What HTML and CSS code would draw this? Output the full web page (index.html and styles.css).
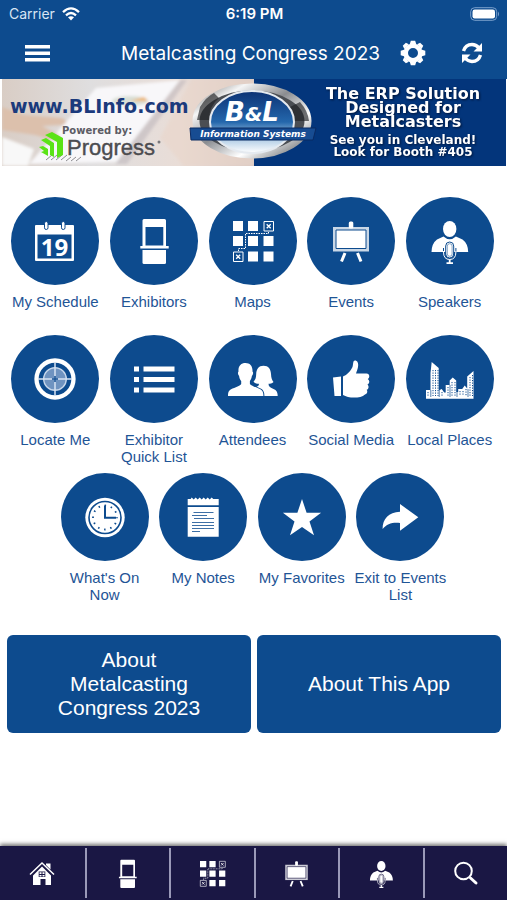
FILE: index.html
```html
<!DOCTYPE html>
<html lang="en">
<head>
<meta charset="utf-8">
<meta name="viewport" content="width=device-width, initial-scale=1">
<title>Metalcasting Congress 2023</title>
<link rel="stylesheet" href="styles.css">
</head>
<body>
<svg class="sprite" aria-hidden="true">
  <symbol id="i-exhibitors" viewBox="-4 -4 56 56">
    <path fill-rule="evenodd" d="M14 2h20.500a1.500 1.500 0 0 1 1.500 1.500V29h2.700v2.500H10.300V29h2.200V3.500A1.500 1.500 0 0 1 14 2zM15.500 10v18.500h17.800V10z"/>
    <path d="M12.500 33H36v12.500a1.500 1.500 0 0 1-1.500 1.500H14a1.500 1.500 0 0 1-1.500-1.500z"/>
  </symbol>
  <symbol id="i-maps" viewBox="-4 -4 56 56">
    <path d="M4 4h10v10H4zM19 4h10v10H19zM4 19h10v10H4zM19 19h10v10H19zM34.500 19h10v10h-10zM19 34.500h10v10H19zM34.500 34.500h10v10h-10z"/>
    <g class="thin">
      <path d="M35 4.500h9.500V14H35zM4.500 35H14v9.500H4.500z"/>
      <path stroke-width="1.300" d="M37.700 7.200l4 4M41.700 7.200l-4 4M7.200 37.700l4 4M11.200 37.700l-4 4"/>
      <path stroke-dasharray="1.500 1" d="M9.500 34v-2.500h7v-15h23V14"/>
    </g>
  </symbol>
  <symbol id="i-events" viewBox="-4 -4 56 56">
    <rect x="21.800" y="4.500" width="4.500" height="7" rx="1.500"/>
    <path fill-opacity=".78" d="M6 10h36v24.500H6z"/>
    <path class="cut-line" d="M9 13h30v18.500H9z"/>
    <path class="leg" d="M18 36l-3.500 8.500M30.500 36l3.500 8.500"/>
  </symbol>
  <symbol id="i-speakers" viewBox="-4 -4 56 56">
    <ellipse cx="23.700" cy="12" rx="6.700" ry="8"/>
    <path d="M17.500 19.500q6.200 5.500 12.400 0l6.600 3q5.500 4 5.700 12.500H5.500q.2-8.500 5.500-12.500z"/>
    <rect class="cut-line" x="19.700" y="25" width="8" height="16" rx="4"/>
    <path class="cut-stroke" d="M17.500 31v4q0 7.500 6.200 7.500t6.200-7.500v-4"/>
    <path class="thin" d="M17.500 34v1q0 7.500 6.200 7.500t6.200-7.500v-1"/>
    <path class="thin" stroke-width="1.800" d="M23.700 42.500V46M20.500 46.200h6.500"/>
    <rect class="cut-hair" x="21.300" y="26.700" width="4.800" height="12.600" rx="2.400"/>
  </symbol>
  <symbol id="i-locate" viewBox="-4 -4 56 56">
    <circle cx="24" cy="24" r="18.500" fill="none" stroke="#fff" stroke-width="4.300"/>
    <circle cx="24" cy="24" r="11.300" fill="#6f93c0" stroke="#c6d6ea" stroke-width="1.400"/>
    <path fill="none" stroke="#d8e4f2" stroke-width="1.500" d="M24 7v14M24 27v14M7 24h14M27 24h14"/>
    <path class="cut-stroke" stroke-width="1" d="M21 24h6M24 21v6"/>
  </symbol>
  <symbol id="i-list" viewBox="-4 -4 56 56">
    <path d="M4 11.500h5v5H4zM13.500 11.500h31v5h-31zM4 22h5v5H4zM13.500 22h31v5h-31zM4 32.500h5v5H4zM13.500 32.500h31v5h-31z"/>
  </symbol>
  <symbol id="i-attendees" viewBox="-4 -4 56 56">
    <path d="M34.500 10.700c5 0 7.300 3.300 7.500 8.300.2 4 1 6 2.500 8-1.500 1.500-3.500 1.700-5 1.700 0 3 2 4 5 5.300 3 1.400 4.200 3 4.200 7H24V34l5-3c1-1 1-1.500.8-2.300-2 0-4-.7-5.300-2 2-2 2.600-4 2.700-7.700.2-5 2.500-8.300 7.300-8.300z"/>
    <path class="cut-under" d="M16.500 8c4.500 0 7.300 3 7 8.500 1 .8.800 3-.6 4.500-.5 3-1.400 4-2 5v3c2 2.500 9 4 11.500 6 1.800 1.500 2 3.500 2 6H-1c0-2.500 0-4.500 2-6 2.500-2 9.500-3.500 11.200-6v-3c-.8-1-1.700-2-2.100-5-1.400-1.500-1.500-3.700-.6-4.500C9 11 12 8 16.500 8z"/>
    <path fill="#0d4b8e" d="M-4 41h56v4H-4z"/>
  </symbol>
  <symbol id="i-thumb" viewBox="-4 -4 56 56">
    <path d="M6 22.500l8-1v19.500H7.500zM16 21.500c4-1.500 8-6 9.500-9.500.6-2 .5-4 1-5.500.7-1.500 3-1.200 4 .5 1.600 3 .2 7-1.500 11.500h10.500c3.500 0 3.500 4.500 1.200 5.500 2.500 1.500 1.800 4.800-.2 5.500 1.700 1.500 1.300 4.700-.8 5.300 1.200 1.700.6 4-1.700 4.700-3.500 3.500-12 3.500-17 2.500-2-.4-3.500-1.500-5-2z"/>
  </symbol>
  <symbol id="i-city" viewBox="-4 -4 56 56">
    <path d="M0 43.800V35h4.500V18l1.200-11 7 6v22.500l3-1.500 2.500 3.500h1.500V30h4v-4.500l3-3 3.500 3V37h2v-3h4l2.500-3.500 2.500 3v-12l6.300-5.500v27.800z"/>
    <path fill="none" stroke="#0d4b8e" stroke-width="1" stroke-dasharray="1.200 1.300" d="M7 15v26M9.500 15v26M12 15v26M2 37v5M22 32v9M26 27v14M29 27v14M34 36v5M37 36v5M40 34v7M44 22v19M46.500 20v21M16 37v4"/>
    <path fill="none" stroke="#0d4b8e" stroke-width=".7" d="M4.800 35v7M13.200 35v7M24 30v12M31 37v5M42 34v8"/>
  </symbol>
  <symbol id="i-clock" viewBox="-4 -4 56 56">
    <circle cx="24" cy="24.500" r="19.700"/>
    <circle class="cut-stroke" cx="24" cy="24.500" r="16" stroke-width="1.600"/>
    <path class="cut-stroke" stroke-width="2" d="M24 12.500v12.300h11"/>
    <circle class="cut-stroke" cx="24" cy="24.500" r="12" stroke-width="1.800" stroke-dasharray="1.500 4.780" stroke-dashoffset=".7"/>
  </symbol>
  <symbol id="i-notes" viewBox="-4 -4 56 56">
    <path d="M8.700 6h3l1-1.500 2 2 2-2 2 2 2-2 2 2 2-2 2 2 2-2 2 2 2-2 1.500 1.500h5.500v6.200h-31zM8.700 14h31v29.700h-31z"/>
    <path class="cut-stroke" stroke-width="1" opacity=".8" d="M14.500 19.500h20M13 22.500h15M15 25.500h20M13 29.500h22M13 32.500h22M13 35.500h22M13 38.500h8"/>
  </symbol>
  <symbol id="i-star" viewBox="-4 -4 56 56">
    <path d="M24 6l4.600 13.800h14.500L31.500 28.600 36 42.300 24 33.900l-12 8.400 4.500-13.700L4.900 19.800h14.500z"/>
  </symbol>
  <symbol id="i-exit" viewBox="-4 -4 56 56">
    <path d="M24 11l18.300 13.300L24 37.700V30c-8-.8-13 1-17.400 6C6.500 26 12.500 19.300 24 18.700z"/>
  </symbol>
  <symbol id="i-home" viewBox="0 0 26 26">
    <path d="M17 3.500h4.500v6L17 5z"/>
    <path d="M13 6.500l9 9V25h-5.500v-6h-5v6H4v-9.500z"/>
    <path fill="none" stroke="#fff" stroke-width="1.500" d="M1 14.500L13 3l12 11.500"/>
    <path class="cut-fill" d="M9.700 11.500h6.600v5.500H9.700z"/>
    <path d="M10.500 12.300h2v1.700h-2zM13.500 12.300h2v1.700h-2zM10.500 15h2v1.500h-2zM13.500 15h2v1.500h-2z"/>
  </symbol>
  <symbol id="i-search" viewBox="0 0 26 26">
    <circle cx="10.500" cy="11" r="8.300" fill="none" stroke="#fff" stroke-width="2"/>
    <path fill="none" stroke="#fff" stroke-width="3" stroke-linecap="round" d="M17.500 18l5.500 5"/>
  </symbol>
</svg>

<header class="header">
  <div class="status">
    <span class="carrier">Carrier
      <svg class="wifi" viewBox="0 0 18 14" aria-hidden="true">
        <path fill="none" stroke="#fff" stroke-width="2.300" d="M1 5.200q8-7.600 16 0M4 8.300q5-4.600 10 0"/>
        <path fill="#fff" d="M9 13.500l-3-3.200q3-2.300 6 0z"/>
      </svg>
    </span>
    <span class="time">6:19 PM</span>
    <svg class="battery" viewBox="0 0 30 14" aria-hidden="true">
      <rect x=".7" y=".7" width="26" height="12.600" rx="4" fill="none" stroke="#7ba0cc"/>
      <rect x="2.500" y="2.500" width="22.500" height="9" rx="2.200" fill="#fff"/>
      <path d="M28 4.500q2 2.500 0 5z" fill="#7ba0cc"/>
    </svg>
  </div>
  <div class="toolbar">
    <button class="tool" type="button" aria-label="Menu">
      <svg width="25" height="17" viewBox="0 0 25 17"><path fill="#fff" d="M0 0h25v3.500H0zM0 6.500h25V10H0zM0 13h25v3.500H0z"/></svg>
    </button>
    <h1 class="title">Metalcasting Congress 2023</h1>
    <button class="tool" type="button" aria-label="Settings">
      <svg width="26" height="26" viewBox="-13 -13 26 26">
        <circle r="7.300" fill="none" stroke="#fff" stroke-width="4.600"/>
        <g fill="#fff">
          <path id="tooth" d="M-3.200-9l1-3.300h4.400l1 3.300z"/>
          <use href="#tooth" transform="rotate(45)"/><use href="#tooth" transform="rotate(90)"/><use href="#tooth" transform="rotate(135)"/><use href="#tooth" transform="rotate(180)"/><use href="#tooth" transform="rotate(225)"/><use href="#tooth" transform="rotate(270)"/><use href="#tooth" transform="rotate(315)"/>
        </g>
      </svg>
    </button>
    <button class="tool" type="button" aria-label="Refresh">
      <svg width="22" height="22" viewBox="0 0 22 22">
        <g fill="none" stroke="#fff" stroke-width="3.400"><path d="M2.500 9Q4.500 2.500 11 2.500q4 0 7 3.500M19.500 13q-2 6.500-8.500 6.500-4 0-7-3.500"/></g>
        <path fill="#fff" d="M21 1v8.500h-8.500zM1 21v-8.500h8.500z"/>
      </svg>
    </button>
  </div>
</header>

<main class="main">
  <a class="banner" href="#sponsor">
    <svg viewBox="0 0 504 87" role="img" aria-label="B&amp;L Information Systems">
      <defs>
        <linearGradient id="photo" x2="1" y2="0"><stop offset="0" stop-color="#d9cdc5"/><stop offset=".35" stop-color="#dfdedf"/><stop offset=".7" stop-color="#e9ddd7"/><stop offset="1" stop-color="#d6c6c0"/></linearGradient>
        <linearGradient id="chrome" x2="1" y2="1"><stop offset="0" stop-color="#777"/><stop offset=".2" stop-color="#f5f5f5"/><stop offset=".45" stop-color="#8a8c90"/><stop offset=".7" stop-color="#fff"/><stop offset="1" stop-color="#55585c"/></linearGradient>
        <linearGradient id="core" x2="0" y2="1"><stop offset="0" stop-color="#0c3274"/><stop offset=".5" stop-color="#2467ac"/><stop offset=".72" stop-color="#9dc0df"/><stop offset="1" stop-color="#fff"/></linearGradient>
        <filter id="soft" x="-10%" y="-10%" width="120%" height="120%"><feGaussianBlur stdDeviation="1.500"/></filter>
        <clipPath id="left"><path d="M0 0h252v87H0z"/></clipPath>
      </defs>
      <path fill="url(#photo)" d="M0 0h252v87H0z"/>
      <g clip-path="url(#left)">
        <g filter="url(#soft)">
          <path fill="#f8f7f9" d="M94 9l84-8-63 82-88 2z"/>
          <path fill="#bfb8bc" d="M178 1l7 0-60 84-12 0z" opacity=".6"/>
          <path fill="#f8f8f8" d="M0 58l32 12-6 17H0z"/>
          <path fill="#dcc0ac" d="M0 28l22 8 38 3q8 4 0 7l-20 1 18 10-5 5-20-6-33-5z"/>
          <path fill="#e9d5c9" d="M190 0h62v87h-70l-24-28z" opacity=".6"/>
          <ellipse cx="128" cy="22" rx="18" ry="5" fill="#d9dfd6"/>
          <path fill="#efb46c" d="M128 22l14-4 4 4z"/>
        </g>
      </g>
      <path fill="none" stroke="#8d8d91" stroke-width="1" d="M44 81l6-5M49 81l6-5M54 81l6-5M59 81l6-5M64 82l5-4M69 82l5-4M74 82l5-4"/>
      <path fill="#03357b" d="M252 0h252v87H252z"/>
      <text class="b-url" x="8" y="34">www.BLInfo.com</text>
      <text class="b-powered" x="60" y="55">Powered by:</text>
      <path fill="#5be316" d="M43 56l7-3 11 6v17l-6 3V63zM39 61l5-2 8 5v14l-4-2V67zM37 68l4-1 5 3v7l-7-4 3-1z"/>
      <text class="b-progress" x="65" y="76">Progress</text>
      <circle cx="157" cy="63" r="1.500" fill="#77777b"/>
      <ellipse cx="251" cy="42.500" rx="58" ry="36" fill="#4b4e53"/>
      <ellipse cx="250" cy="42" rx="56" ry="34" fill="none" stroke="url(#chrome)" stroke-width="7"/>
      <path fill="#202225" d="M198 28q6-10 14-14l5 5q-10 8-10 22h-12zM298 23q8 9 9 19h-16l-5-13z" opacity=".65"/>
      <ellipse cx="250" cy="43" rx="42" ry="31" fill="url(#core)" stroke="#e5eaf0" stroke-width="2"/>
      <path fill="#174c92" stroke="#092a63" stroke-width="1" d="M188 49h126l-3 12H189z"/>
      <text class="b-logo" x="250" y="42" text-anchor="middle">B<tspan font-size="20">&amp;</tspan>L</text>
      <text class="b-info" x="251" y="58" text-anchor="middle">Information Systems</text>
      <g class="b-copy" text-anchor="middle">
        <text x="401" y="20">The ERP Solution</text>
        <text x="401" y="34">Designed for</text>
        <text x="401" y="48">Metalcasters</text>
      </g>
      <g class="b-note" text-anchor="middle">
        <text x="401" y="65">See you in Cleveland!</text>
        <text x="401" y="77">Look for Booth #405</text>
      </g>
    </svg>
  </a>

  <nav class="grid" aria-label="Event">
    <a class="item" href="#schedule"><span class="disc"><svg class="icon" viewBox="-4 -4 56 56">
      <path fill-rule="evenodd" d="M5 8h37a1 1 0 0 1 1 1v34a1 1 0 0 1-1 1H5a1 1 0 0 1-1-1V9a1 1 0 0 1 1-1zM6.500 17.500v24h34v-24z"/>
      <rect class="cut-line" x="13.500" y="4.500" width="3.500" height="8" rx="1.700"/>
      <rect class="cut-line" x="30.500" y="4.500" width="3.500" height="8" rx="1.700"/>
      <text class="day" x="23.500" y="38.500" text-anchor="middle">19</text>
    </svg></span>My Schedule</a>
    <a class="item" href="#exhibitors"><span class="disc"><svg class="icon"><use href="#i-exhibitors"/></svg></span>Exhibitors</a>
    <a class="item" href="#maps"><span class="disc"><svg class="icon"><use href="#i-maps"/></svg></span>Maps</a>
    <a class="item" href="#events"><span class="disc"><svg class="icon"><use href="#i-events"/></svg></span>Events</a>
    <a class="item" href="#speakers"><span class="disc"><svg class="icon"><use href="#i-speakers"/></svg></span>Speakers</a>
    <a class="item" href="#locate"><span class="disc"><svg class="icon"><use href="#i-locate"/></svg></span>Locate Me</a>
    <a class="item" href="#quick"><span class="disc"><svg class="icon"><use href="#i-list"/></svg></span>Exhibitor Quick List</a>
    <a class="item" href="#attendees"><span class="disc"><svg class="icon"><use href="#i-attendees"/></svg></span>Attendees</a>
    <a class="item" href="#social"><span class="disc"><svg class="icon"><use href="#i-thumb"/></svg></span>Social Media</a>
    <a class="item" href="#places"><span class="disc"><svg class="icon"><use href="#i-city"/></svg></span>Local Places</a>
    <a class="item" href="#now"><span class="disc"><svg class="icon"><use href="#i-clock"/></svg></span>What's On Now</a>
    <a class="item" href="#notes"><span class="disc"><svg class="icon"><use href="#i-notes"/></svg></span>My Notes</a>
    <a class="item" href="#favorites"><span class="disc"><svg class="icon"><use href="#i-star"/></svg></span>My Favorites</a>
    <a class="item" href="#exit"><span class="disc"><svg class="icon"><use href="#i-exit"/></svg></span>Exit to Events List</a>
  </nav>

  <div class="about">
    <button class="about-btn" type="button">About Metalcasting Congress 2023</button>
    <button class="about-btn" type="button">About This App</button>
  </div>
</main>

<nav class="tabs" aria-label="Main">
  <a class="tab" href="#home" aria-label="Home"><svg class="tab-icon small"><use href="#i-home"/></svg></a>
  <a class="tab" href="#exhibitors" aria-label="Exhibitors"><svg class="tab-icon"><use href="#i-exhibitors"/></svg></a>
  <a class="tab" href="#maps" aria-label="Maps"><svg class="tab-icon"><use href="#i-maps"/></svg></a>
  <a class="tab" href="#events" aria-label="Events"><svg class="tab-icon"><use href="#i-events"/></svg></a>
  <a class="tab" href="#speakers" aria-label="Speakers"><svg class="tab-icon"><use href="#i-speakers"/></svg></a>
  <a class="tab" href="#search" aria-label="Search"><svg class="tab-icon small"><use href="#i-search"/></svg></a>
</nav>
</body>
</html>
```
FILE: styles.css
```css
:root {
  --blue: #0d4b8e;
  --navy: #1a1744;
  --cut: var(--blue);
}

* { box-sizing: border-box; }

body {
  margin: 0;
  min-height: 100vh;
  display: flex;
  flex-direction: column;
  background: #fff;
  font-family: "Liberation Sans", Arial, sans-serif;
}

a { color: inherit; text-decoration: none; }

button {
  border: 0;
  padding: 0;
  color: inherit;
  font: inherit;
  background: none;
}

.sprite { position: absolute; width: 0; height: 0; }

.header {
  background: var(--blue);
  color: #fff;
  font-family: Inter, sans-serif;
}

.status {
  display: grid;
  grid-template-columns: 1fr auto 1fr;
  align-items: center;
  height: 27px;
  padding: 0 7px 0 9px;
  font-size: 14px;
}

.carrier { display: flex; align-items: center; gap: 7px; color: #d8e5f4; }
.wifi { width: 18px; height: 14px; }
.time { font-size: 15px; font-weight: 600; }
.battery { width: 30px; height: 14px; justify-self: end; }

.toolbar {
  display: flex;
  align-items: center;
  height: 52px;
  padding: 0 10px 0 12px;
}

.title {
  margin: 0 8px 0 auto;
  font-size: 19px;
  font-weight: 400;
}

.tool {
  display: flex;
  align-items: center;
  justify-content: center;
  width: 50px;
  height: 44px;
}

.tool + .tool { margin-left: 9px; }

.banner { display: block; margin: 0 1px 0 2px; }
.banner svg { display: block; width: 100%; height: auto; }

.banner text { font-family: "DejaVu Sans", sans-serif; font-weight: 700; }
.banner .b-url { font-size: 19px; fill: #1b3a7c; }
.banner .b-powered { font-size: 10px; fill: #5c5c64; }
.banner .b-progress { font-family: "Liberation Sans", Arial, sans-serif; font-size: 22px; font-weight: 400; fill: #4c4c50; stroke: #4c4c50; stroke-width: .4; }
.banner .b-logo { font-size: 26px; font-style: italic; fill: #fff; }
.banner .b-info { font-size: 9px; font-style: italic; fill: #fff; }
.b-copy, .b-note { fill: #fff; filter: drop-shadow(1px 1px 1px #001437); }
.b-copy { font-size: 16px; }
.b-note { font-size: 12px; }

.grid {
  display: flex;
  flex-wrap: wrap;
  justify-content: center;
  padding: 31px 8px 0 6px;
}

.item {
  width: 20%;
  min-height: 138px;
  display: flex;
  flex-direction: column;
  align-items: center;
  color: #1f5596;
  font-size: 15px;
  line-height: 17px;
  text-align: center;
}

.disc {
  display: flex;
  align-items: center;
  justify-content: center;
  width: 88px;
  height: 88px;
  margin-bottom: 8px;
  border-radius: 50%;
  background: var(--blue);
}

.icon { width: 56px; height: 56px; fill: #fff; }

.day { font: 700 24px "Open Sans", sans-serif; }
.thin { fill: none; stroke: #fff; }
.leg { fill: none; stroke: #fff; stroke-width: 3; }
.cut-line { stroke: var(--cut); stroke-width: 1; }
.cut-stroke { fill: none; stroke: var(--cut); }
.cut-hair { fill: none; stroke: var(--cut); stroke-width: 1; opacity: .5; }
.cut-under { stroke: var(--cut); stroke-width: 2; paint-order: stroke; }
.cut-fill { fill: var(--cut); }

.about {
  display: grid;
  grid-template-columns: 1fr 1fr;
  gap: 6px;
  padding: 24px 6px 24px 7px;
}

.about-btn {
  min-height: 98px;
  padding: 12px 40px;
  border-radius: 6px;
  background: var(--blue);
  color: #fff;
  font-size: 21px;
  line-height: 24px;
}

.tabs {
  --cut: var(--navy);
  display: grid;
  grid-template-columns: repeat(6, 1fr);
  margin-top: auto;
  padding: 2px 0;
  background: var(--navy);
  box-shadow: 0 -2px 4px rgba(0, 0, 0, .55);
}

.tab {
  display: flex;
  align-items: center;
  justify-content: center;
  height: 50px;
  fill: #fff;
}

.tab + .tab { border-left: 2px solid #9a99b8; }

.tab-icon { width: 35px; height: 35px; }
.tab-icon.small { width: 26px; height: 26px; }
```
